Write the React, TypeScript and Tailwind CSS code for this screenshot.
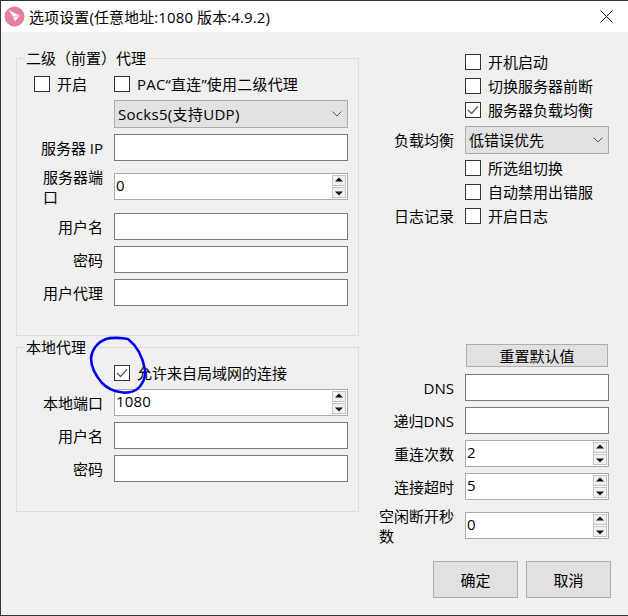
const font = "[font-family:'Open_Sans','Noto_Sans_CJK_SC',sans-serif]";

const Check = ({ checked = false }: { checked?: boolean }) => (
  <span className="flex h-4 w-4 shrink-0 items-center justify-center border border-[#333333] bg-white">
    {checked && (
      <svg width="12" height="10" viewBox="0 0 12 10" fill="none">
        <path d="M1 5l3.5 3.5L11 1.2" stroke="#606060" strokeWidth="1.3" />
      </svg>
    )}
  </span>
);

const CheckRow = ({ label, checked, className = "" }: { label: string; checked?: boolean; className?: string }) => (
  <div className={`flex h-4 items-center gap-[7px] whitespace-nowrap ${className}`}>
    <Check checked={checked} />
    <span>{label}</span>
  </div>
);

const Chevron = () => (
  <svg width="10" height="6" viewBox="0 0 10 6" fill="none" className="shrink-0">
    <path d="M0.5 0.5L5 5L9.5 0.5" stroke="#555555" strokeWidth="1" />
  </svg>
);

const Select = ({ value, className = "" }: { value: string; className?: string }) => (
  <div className={`flex h-7 items-center justify-between border border-[#adadad] bg-[#e1e1e1] pl-[3px] pr-[5px] ${className}`}>
    <span>{value}</span>
    <Chevron />
  </div>
);

const Input = ({ className = "" }: { className?: string }) => (
  <div className={`h-[27px] border border-[#7a7a7a] bg-white ${className}`} />
);

const SpinBtn = ({ up }: { up?: boolean }) => (
  <span className="flex h-[11px] w-[14px] items-center justify-center border border-[#c4c4c4] bg-[#f0f0f0]">
    <svg width="8" height="7" viewBox="0 0 8 7">
      {up ? <path d="M4 0.5L8 4.5H0Z" fill="#111111" /> : <path d="M4 6.5L8 2.5H0Z" fill="#111111" />}
    </svg>
  </span>
);

const Spin = ({ value, className = "" }: { value: string; className?: string }) => (
  <div className={`flex h-[27px] items-center justify-between border border-[#ababab] bg-white pl-[1px] pr-[1px] ${className}`}>
    <span className="mb-[3px] tracking-[0.2px]">{value}</span>
    <span className="flex flex-col gap-px">
      <SpinBtn up />
      <SpinBtn />
    </span>
  </div>
);

const Row = ({ label, children, className = "" }: { label: React.ReactNode; children: React.ReactNode; className?: string }) => (
  <div className={`flex h-[27px] items-center ${className}`}>
    <div className="flex w-[86px] justify-end">
      <span className="whitespace-nowrap leading-5">{label}</span>
    </div>
    <div className="ml-[11px] w-[234px]">{children}</div>
  </div>
);

const RightRow = ({ label, children, className = "" }: { label: string; children: React.ReactNode; className?: string }) => (
  <div className={`flex items-center ${className}`}>
    <div className="flex w-[94px] justify-end">
      <span className="max-w-[75px] leading-5">{label}</span>
    </div>
    <div className="ml-[11px] w-[144px]">{children}</div>
  </div>
);

const Group = ({ title, className, children }: { title: string; className: string; children: React.ReactNode }) => (
  <div className={`relative border border-[#dcdcdc] ${className}`}>
    <span className="absolute -top-[11px] left-[8px] whitespace-nowrap bg-[#f0f0f0] px-[1px]">{title}</span>
    {children}
  </div>
);

export default function App() {
  return (
    <div className={`relative flex h-[616px] w-[628px] flex-col overflow-hidden border-y border-l border-[#333333] bg-[#f0f0f0] text-[15px] leading-5 text-black ${font}`}>
      {/* title bar */}
      <div className="flex h-[31px] shrink-0 items-center bg-white pl-[3px] pr-[15px]">
        <svg width="21" height="21" viewBox="0 0 21 21" className="shrink-0">
          <circle cx="10.5" cy="10.5" r="10" fill="#e57fa2" />
          <path d="M4.5 4L16 9.5L11 15.5L9 11Z" fill="#fdf0f4" />
          <path d="M9 11L16 9.5" stroke="#e9a3bb" strokeWidth="0.8" />
        </svg>
        <span className="ml-[4px] tracking-[0.1px]">选项设置(任意地址:1080 版本:4.9.2)</span>
        <svg width="13" height="13" viewBox="0 0 13 13" fill="none" className="ml-auto">
          <path d="M0.5 0.5L12.5 12.5M12.5 0.5L0.5 12.5" stroke="#111111" strokeWidth="1" />
        </svg>
      </div>

      <div className="flex">
        {/* left column */}
        <div className="ml-[15px] mt-[26px] w-[343px] shrink-0">
          <Group title="二级（前置）代理" className="h-[278px] pt-[17px]">
            <div className="flex">
              <CheckRow label="开启" className="ml-[17px]" />
              <CheckRow label="PAC“直连”使用二级代理" className="ml-[27px] tracking-[0.2px]" />
            </div>
            <div className="ml-[97px] mt-[8px] w-[234px]"><Select value="Socks5(支持UDP)" className="tracking-[0.3px]" /></div>
            <Row label="服务器 IP" className="mt-[6px]"><Input /></Row>
            <Row label={<>服务器端<br />口</>} className="mt-[12px]"><Spin value="0" /></Row>
            <Row label="用户名" className="mt-[13px]"><Input /></Row>
            <Row label="密码" className="mt-[6px]"><Input /></Row>
            <Row label="用户代理" className="mt-[6px]"><Input /></Row>
          </Group>
          <Group title="本地代理" className="mt-[11px] h-[165px] pt-[17px]">
            <CheckRow label="允许来自局域网的连接" checked className="ml-[97px]" />
            <Row label="本地端口" className="mt-[8px]"><Spin value="1080" /></Row>
            <Row label="用户名" className="mt-[6px]"><Input /></Row>
            <Row label="密码" className="mt-[6px]"><Input /></Row>
          </Group>
        </div>

        {/* right column */}
        <div className="ml-[1px] mt-[22px] w-[260px]">
          <div className="ml-[105px] flex flex-col gap-2">
            <CheckRow label="开机启动" />
            <CheckRow label="切换服务器前断" />
            <CheckRow label="服务器负载均衡" checked />
          </div>
          <RightRow label="负载均衡" className="mt-2 h-7"><Select value="低错误优先" /></RightRow>
          <div className="ml-[105px] mt-[6px] flex flex-col gap-2">
            <CheckRow label="所选组切换" />
            <CheckRow label="自动禁用出错服" />
          </div>
          <RightRow label="日志记录" className="mt-2 h-4"><CheckRow label="开启日志" /></RightRow>
          <button className="ml-[106px] mt-[120px] flex h-[23px] w-[142px] items-center justify-center border border-[#adadad] bg-[#e1e1e1]">重置默认值</button>
          <RightRow label="DNS" className="mt-[7px] h-[27px]"><Input /></RightRow>
          <RightRow label="递归DNS" className="mt-[6px] h-[27px]"><Input /></RightRow>
          <RightRow label="重连次数" className="mt-[6px] h-[27px]"><Spin value="2" /></RightRow>
          <RightRow label="连接超时" className="mt-[6px] h-[27px]"><Spin value="5" /></RightRow>
          <RightRow label="空闲断开秒数" className="mt-[12px] h-[27px]"><Spin value="0" /></RightRow>
          <div className="ml-[73px] mt-[22px] flex gap-2">
            <button className="flex h-[37px] w-[85px] items-center justify-center border border-[#adadad] bg-[#e1e1e1]">确定</button>
            <button className="flex h-[37px] w-[85px] items-center justify-center border border-[#adadad] bg-[#e1e1e1]">取消</button>
          </div>
        </div>
      </div>

      {/* hand-drawn annotation */}
      <svg width="70" height="70" viewBox="0 0 70 70" fill="none" className="absolute left-[84px] top-[331px]">
        <path
          d="M43 7C38 6 27 5 21 7C13 10 7 17 6 26C6 34 11 44 17 51C22 56 27 59 35 60C40 61 46 61 51 58C57 54 61 46 60 38C58 26 52 14 43 7Z"
          stroke="#0000ee"
          strokeWidth="2.6"
          strokeLinejoin="round"
        />
      </svg>
    </div>
  );
}
